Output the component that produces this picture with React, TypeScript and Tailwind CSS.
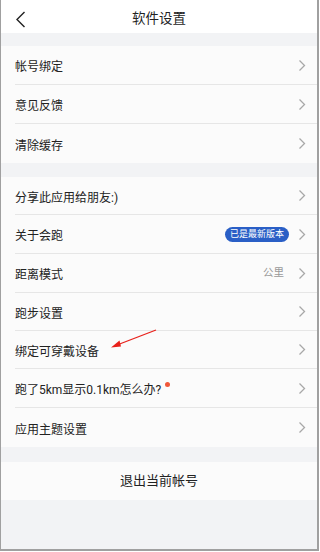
import React from "react";

const font = { fontFamily: 'Roboto, "Noto Sans CJK SC", "Noto Sans", sans-serif' };

function Chevron() {
  return (
    <svg width="8" height="13" viewBox="0 0 8 13" className="shrink-0">
      <path d="M1.5 1.5 L6.5 6.5 L1.5 11.5" fill="none" stroke="#a8a8a8" strokeWidth="1.3" />
    </svg>
  );
}

function Row({ label, right, last, dot, h }: { label: string; right?: React.ReactNode; last?: boolean; dot?: boolean; h: string }) {
  return (
    <div className={`${h} pl-[14px] flex bg-[#fbfbfb]`}>
      <div className={`flex-1 flex items-center pr-[11px] ${last ? "" : "border-b border-[#e6e6e6]"}`}>
        <span className="text-[12px] text-[#222] relative translate-y-[2px]">
          {label}
          {dot && <span className="absolute -right-[9px] top-[1px] w-[5px] h-[5px] rounded-full bg-[#f0583b]" />}
        </span>
        <div className="flex-1" />
        {right}
        <div className="ml-[9px] flex items-center">
          <Chevron />
        </div>
      </div>
    </div>
  );
}

export default function App() {
  return (
    <div className="w-[320px] h-[552px] bg-white" style={font}>
      <div className="w-[319px] h-[551px] border-l border-r-2 border-b-2 border-[#a0a0a0] bg-[#f2f3f5] flex flex-col relative overflow-hidden">
        <div className="h-[33px] bg-white flex items-center relative shrink-0">
          <svg width="11" height="17" viewBox="0 0 11 17" className="absolute left-[14px] top-[11px]">
            <path d="M9.5 1 L2 8.5 L9.5 16" fill="none" stroke="#222" strokeWidth="1.4" />
          </svg>
          <div className="flex-1 text-center text-[13.5px] text-[#222] pt-[4px]">软件设置</div>
        </div>
        <div className="h-[13px] shrink-0" />
        <div className="flex flex-col">
          <Row h="h-[39px]" label="帐号绑定" />
          <Row h="h-[39px]" label="意见反馈" />
          <Row h="h-[39px]" label="清除缓存" last />
        </div>
        <div className="h-[14px] shrink-0" />
        <div className="flex flex-col">
          <Row h="h-[38px]" label="分享此应用给朋友:)" />
          <Row
            h="h-[39px]"
            label="关于会跑"
            right={
              <span className="h-[15px] px-[5px] rounded-full bg-[#2a5fc6] text-white text-[9px] leading-[15px]">已是最新版本</span>
            }
          />
          <Row h="h-[39px]" label="距离模式" right={<span className="text-[10.5px] text-[#999] mr-[5px]">公里</span>} />
          <Row h="h-[38px]" label="跑步设置" />
          <Row h="h-[38px]" label="绑定可穿戴设备" />
          <Row h="h-[39px]" label="跑了5km显示0.1km怎么办?" dot />
          <Row h="h-[39px]" label="应用主题设置" last />
        </div>
        <div className="h-[15px] shrink-0" />
        <div className="h-[38px] bg-[#fbfbfb] flex items-center justify-center text-[13px] text-[#222] shrink-0">退出当前帐号</div>
        <svg className="absolute left-0 top-0" width="317" height="549" viewBox="0 0 317 549">
          <line x1="155" y1="330" x2="116" y2="345" stroke="#e8201a" strokeWidth="1.3" />
          <path d="M110 347.5 L118.5 340.5 L120 346.5 Z" fill="#e8201a" />
        </svg>
      </div>
    </div>
  );
}
